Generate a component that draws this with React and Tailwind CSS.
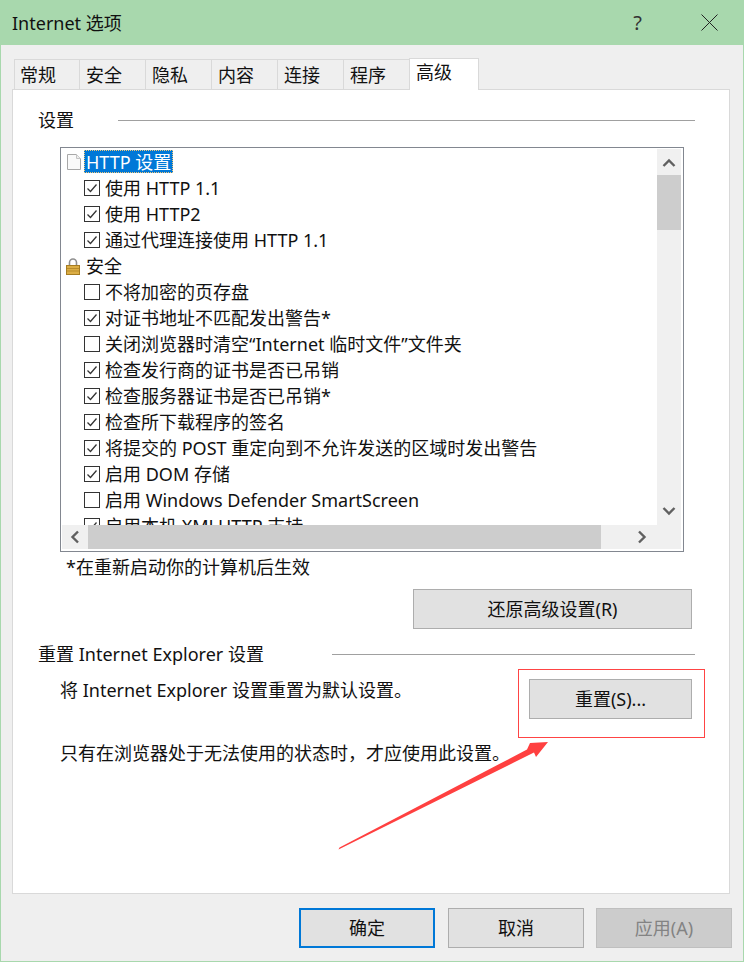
const tabs = ['常规', '安全', '隐私', '内容', '连接', '程序']

const rows = [
  { type: 'doc', label: 'HTTP 设置', selected: true },
  { type: 'on', label: '使用 HTTP 1.1' },
  { type: 'on', label: '使用 HTTP2' },
  { type: 'on', label: '通过代理连接使用 HTTP 1.1' },
  { type: 'lock', label: '安全' },
  { type: 'off', label: '不将加密的页存盘' },
  { type: 'on', label: '对证书地址不匹配发出警告*' },
  { type: 'off', label: '关闭浏览器时清空“Internet 临时文件”文件夹' },
  { type: 'on', label: '检查发行商的证书是否已吊销' },
  { type: 'on', label: '检查服务器证书是否已吊销*' },
  { type: 'on', label: '检查所下载程序的签名' },
  { type: 'on', label: '将提交的 POST 重定向到不允许发送的区域时发出警告' },
  { type: 'on', label: '启用 DOM 存储' },
  { type: 'off', label: '启用 Windows Defender SmartScreen' },
  { type: 'on', label: '启用本机 XMLHTTP 支持' },
]

function Chevron({ d }) {
  return (
    <svg width="14" height="14" viewBox="0 0 14 14" fill="none" stroke="#606060" strokeWidth="2.4">
      <path d={d} />
    </svg>
  )
}

function RowIcon({ type }) {
  if (type === 'doc') {
    return (
      <svg width="14" height="16" viewBox="0 0 14 16" className="ml-[5px] mr-[5px] shrink-0">
        <path d="M0.5 0.5H9.5L13.5 4.5V15.5H0.5Z" fill="#fafafa" stroke="#a8a8a8" />
        <path d="M9.5 0.5V4.5H13.5" fill="#eee" stroke="#c4c4c4" />
      </svg>
    )
  }
  if (type === 'lock') {
    return (
      <svg width="14" height="17" viewBox="0 0 14 17" className="ml-[4px] mr-[6px] shrink-0">
        <path d="M3.5 8V4.5a3.5 3.5 0 0 1 7 0V8" fill="none" stroke="#8f8f8f" strokeWidth="1.6" />
        <rect x="0.5" y="7.5" width="13" height="9" fill="#dcae45" stroke="#a67c22" />
        <path d="M1 10.5H13M1 13H13" stroke="#b98c2c" />
      </svg>
    )
  }
  return (
    <span className="ml-[22px] mr-[5px] flex h-[16px] w-[16px] shrink-0 items-center justify-center border border-[#333] bg-white">
      {type === 'on' && (
        <svg width="12" height="12" viewBox="0 0 12 12" fill="none" stroke="#333" strokeWidth="1.3">
          <path d="M1.5 6.5L4.5 9.5L10.5 2.5" />
        </svg>
      )}
    </span>
  )
}

function SettingsRow({ type, label, selected }) {
  return (
    <div className="flex h-[26px] shrink-0 items-center whitespace-nowrap">
      <RowIcon type={type} />
      {selected ? (
        <span className="-ml-[2px] flex h-[23px] -translate-y-[1px] items-center border border-dotted border-[#f2c879] bg-[#0078d7] px-px pt-[2px] text-white">{label}</span>
      ) : (
        <span>{label}</span>
      )}
    </div>
  )
}

function Legend({ label, width }) {
  return (
    <div className="flex items-center">
      <span className={`${width} shrink-0 whitespace-nowrap`}>{label}</span>
      <span className="h-px flex-1 bg-[#a0a0a0]" />
    </div>
  )
}

function DialogButton({ label, className = '' }) {
  return (
    <button type="button" className={`flex h-[40px] items-center justify-center bg-[#e1e1e1] ${className}`}>
      {label}
    </button>
  )
}

export default function App() {
  return (
    <div
      className="relative flex h-[962px] w-[744px] flex-col overflow-hidden border-x border-b border-[#a8d8ad] bg-[#efefef] text-[18px] leading-[26px] text-[#111]"
      style={{ fontFamily: '"Noto Sans", "Noto Sans CJK SC", sans-serif' }}
    >
      {/* Title bar */}
      <div className="-mx-px flex h-[45px] shrink-0 items-center bg-[#a8d8ad] pl-[12px]">
        <span className="flex-1">Internet 选项</span>
        <span className="mr-[59px] text-[20px] text-[#333]">?</span>
        <svg width="17" height="17" viewBox="0 0 17 17" stroke="#222" className="mr-[26px]">
          <path d="M0.5 0.5L16.5 16.5M16.5 0.5L0.5 16.5" />
        </svg>
      </div>

      {/* Tabs */}
      <div className="mt-[12px] flex h-[32px] shrink-0 items-end pl-[13px]">
        {tabs.map((tab) => (
          <div key={tab} className="flex h-[30px] w-[66px] items-center border-t border-l border-[#d9d9d9] pl-[6px] first:w-[65px] first:pl-[5px] last:w-[65px]">
            {tab}
          </div>
        ))}
        <div className="z-10 -mb-px flex h-[32px] w-[70px] items-start border-x border-t border-[#d9d9d9] bg-white pl-[6px]">高级</div>
      </div>

      {/* Tab panel */}
      <div className="ml-[11px] mr-[13px] flex h-[805px] shrink-0 flex-col border border-[#d9d9d9] bg-white pl-[25px] pr-[34px]">
        <div className="mt-[17px]">
          <Legend label="设置" width="w-[80px]" />
        </div>

        <div className="-mr-[11px] ml-[22px] mt-[14px] grid h-[405px] w-[624px] shrink-0 grid-cols-[595px_24px] grid-rows-[376px_24px] border border-[#828790] p-px pr-[2px] pb-[2px]">
          <div className="flex flex-col overflow-hidden">
            {rows.map((row) => (
              <SettingsRow key={row.label} {...row} />
            ))}
          </div>

          <div className="flex flex-col items-center bg-[#f0f0f0]">
            <div className="flex h-[26px] shrink-0 items-center justify-center pt-[2px]">
              <Chevron d="M1.5 10L7 4.5L12.5 10" />
            </div>
            <div className="h-[55px] w-full shrink-0 bg-[#cdcdcd]" />
            <div className="flex-1" />
            <div className="flex h-[26px] shrink-0 items-center justify-center pb-[2px]">
              <Chevron d="M1.5 4L7 9.5L12.5 4" />
            </div>
          </div>

          <div className="flex items-center bg-[#f0f0f0]">
            <div className="flex w-[26px] shrink-0 items-center justify-center">
              <Chevron d="M10 1.5L4.5 7L10 12.5" />
            </div>
            <div className="h-full w-[513px] shrink-0 bg-[#cdcdcd]" />
            <div className="flex flex-1 items-center justify-end pr-[8px]">
              <Chevron d="M4 1.5L9.5 7L4 12.5" />
            </div>
          </div>
          <div className="bg-[#f0f0f0]" />
        </div>

        <p className="ml-[28px] mt-[2px]">*在重新启动你的计算机后生效</p>

        <div className="mt-[9px] flex justify-end">
          <DialogButton label="还原高级设置(R)" className="-mr-[-3px] w-[279px] border border-[#adadad]" />
        </div>

        <div className="mt-[12px]">
          <Legend label="重置 Internet Explorer 设置" width="w-[294px]" />
        </div>

        <div className="mt-[12px] flex items-start">
          <p className="ml-[22px] -mt-[2px] flex-1">将 Internet Explorer 设置重置为默认设置。</p>
          <DialogButton label="重置(S)..." className="mr-[3px] w-[163px] border border-[#adadad]" />
        </div>

        <p className="ml-[22px] mt-[21px]">只有在浏览器处于无法使用的状态时，才应使用此设置。</p>
      </div>

      {/* Dialog buttons */}
      <div className="mt-[14px] flex justify-end gap-[12px] pr-[11px]">
        <DialogButton label="确定" className="mr-px w-[136px] border-2 border-[#0078d7]" />
        <DialogButton label="取消" className="w-[136px] border border-[#adadad]" />
        <button type="button" className="flex h-[40px] w-[136px] items-center justify-center border border-[#bfbfbf] bg-[#cccccc] text-[#838383]">
          应用(A)
        </button>
      </div>

      {/* Red annotation box and arrow */}
      <div className="absolute left-[517px] top-[669px] h-[69px] w-[187px] border border-[#f44]" />
      <svg width="744" height="962" viewBox="0 0 744 962" className="pointer-events-none absolute -left-px top-0">
        <path d="M338.5 849.5L339.5 847.5L527 749.5L530 743L548 742L536 757L534 752.5Z" fill="#ff4040" />
      </svg>
    </div>
  )
}
